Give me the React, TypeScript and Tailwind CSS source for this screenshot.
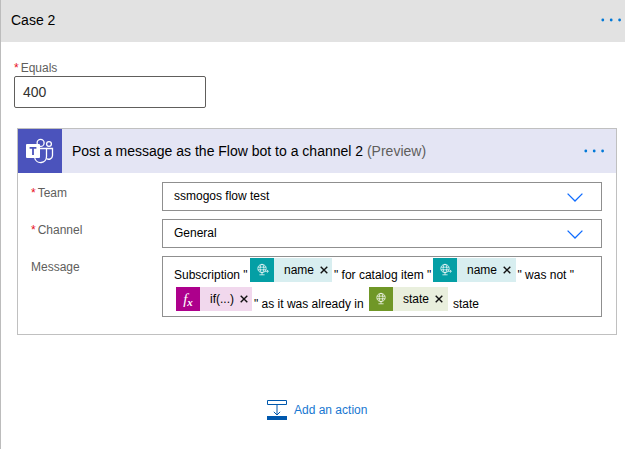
import type { ReactNode } from "react";

function Dots({ className = "" }: { className?: string }) {
  return (
    <svg className={className} width="21" height="4" viewBox="0 0 21 4" fill="#0078d7">
      <circle cx="1.8" cy="2" r="1.4" />
      <circle cx="10.2" cy="2" r="1.4" />
      <circle cx="18.6" cy="2" r="1.4" />
    </svg>
  );
}

function TeamsIcon() {
  return (
    <svg width="44" height="44" viewBox="0 0 44 44" fill="none" stroke="#fff" strokeWidth="1.3">
      <circle cx="22.6" cy="13.9" r="3.5" />
      <circle cx="31" cy="15" r="2.4" />
      <path d="M21.5 19.5h7v8a6 6 0 0 1-11.8 1.6" />
      <path d="M28.5 19.5h6v7a3.8 3.8 0 0 1-6 3" />
      <rect x="8" y="15" width="14" height="14" rx="1" fill="#fff" stroke="none" />
      <path d="M11.6 18.9h6.8M15 18.9v7.1" stroke="#4b53bc" strokeWidth="1.8" />
    </svg>
  );
}

function GlobeIcon({ arrow = false }: { arrow?: boolean }) {
  return (
    <svg width="24" height="24" viewBox="0 0 24 24" fill="none" stroke="#fff" strokeOpacity="0.9" strokeWidth="0.8">
      <circle cx="12" cy="10.5" r="4.2" />
      <ellipse cx="12" cy="10.5" rx="1.9" ry="4.2" />
      <path d="M8.1 9.2h7.8M8.1 11.8h7.8M12 14.7v2M9.4 16.8h5.2" />
      {arrow && <path d="M14.8 13.3h3.4M16.9 11.9l1.5 1.4-1.5 1.4" />}
    </svg>
  );
}

function Chip({ icon, label, className, iconClass }: { icon: ReactNode; label: string; className: string; iconClass: string }) {
  return (
    <span className={`flex h-6 shrink-0 items-center ${className}`}>
      <span className={`flex size-6 items-center justify-center ${iconClass}`}>{icon}</span>
      <span className="ml-2.5 leading-6">{label}</span>
      <svg className="-mt-px ml-[5.5px]" width="8" height="8" viewBox="0 0 8 8" stroke="#111" strokeWidth="1.4">
        <path d="M.7.7l6.6 6.6M7.3.7L.7 7.3" />
      </svg>
    </span>
  );
}

function Label({ children, required = false }: { children: string; required?: boolean }) {
  return (
    <div className="w-[131px] shrink-0 pt-[3px] text-xs leading-4 text-[#605e5c]">
      {required && <span className="mr-[2px] text-[#e81123]">*</span>}
      {children}
    </div>
  );
}

function Select({ value }: { value: string }) {
  return (
    <div className="flex h-[29px] w-[440px] items-center justify-between border border-[#8f8f8f] pr-[18px] pl-[11px] text-xs text-black">
      <span className="-mt-[2px]">{value}</span>
      <svg className="mt-px" width="16" height="9" viewBox="0 0 16 9" fill="none" stroke="#0f6cff" strokeWidth="1.3">
        <path d="M.6.6L8 8 15.4.6" />
      </svg>
    </div>
  );
}

export default function App() {
  return (
    <div className="h-[449px] w-[625px] overflow-hidden border-l border-[#bcbcbc] bg-white font-['Liberation_Sans',Arial,sans-serif] text-black">
      <header className="flex h-[42px] items-center justify-between bg-[#e2e2e2] pr-[3px] pl-[10px] text-sm">
        <span className="-mt-[3px]">Case 2</span>
        <Dots className="-mt-[2px]" />
      </header>

      <div className="mt-[18px] ml-[13px] w-48">
        <div className="h-4 text-xs leading-4 text-[#605e5c]">
          <span className="mr-[2px] text-[#e81123]">*</span>Equals
        </div>
        <div className="flex h-8 items-center rounded-xs border border-[#605e5c] px-2 text-sm text-[#323130]">400</div>
      </div>

      <section className="mt-5 ml-4 h-[207px] w-[600px] border border-[#c0c0c0]">
        <div className="flex h-11 items-center bg-[#e4e5f4] text-sm">
          <div className="size-11 bg-[#4b53bc]">
            <TeamsIcon />
          </div>
          <div className="ml-2.5">
            Post a message as the Flow bot to a channel 2 <span className="text-[#605e5c]">(Preview)</span>
          </div>
          <Dots className="mr-[11px] ml-auto" />
        </div>
        <div className="flex flex-col gap-2 pt-[9px] pl-[13px]">
          <div className="flex">
            <Label required>Team</Label>
            <Select value="ssmogos flow test" />
          </div>
          <div className="flex">
            <Label required>Channel</Label>
            <Select value="General" />
          </div>
          <div className="flex">
            <Label>Message</Label>
            <div className="h-[61px] w-[440px] border border-[#8f8f8f] pt-px pl-[11px] text-xs leading-6 whitespace-nowrap">
              <div className="flex h-6">
                <span className="w-[76px] pt-[5px]">Subscription "</span>
                <Chip className="w-[82px] bg-[#d8eef0]" iconClass="bg-[#049fa5]" label="name" icon={<GlobeIcon arrow />} />
                <span className="w-[101px] pt-[5px] pl-[2px]">" for catalog item "</span>
                <Chip className="w-[83px] bg-[#d8eef0]" iconClass="bg-[#049fa5]" label="name" icon={<GlobeIcon arrow />} />
                <span className="pt-[5px] pl-[1.5px]">" was not "</span>
              </div>
              <div className="mt-[5px] ml-[2px] flex h-6">
                <Chip
                  className="w-[76px] bg-[#f1d8ed]"
                  iconClass="bg-[#ad008c]"
                  label="if(...)"
                  icon={
                    <span className="flex items-baseline font-['Liberation_Serif',serif] leading-6 text-white italic">
                      <span className="text-[15px]">f</span>
                      <span className="relative top-[2px] text-[11px] font-bold">x</span>
                    </span>
                  }
                />
                <span className="w-[117px] pt-[5px] pl-[2px]">" as it was already in</span>
                <Chip className="w-[79px] bg-[#e9efdd]" iconClass="bg-[#709727]" label="state" icon={<GlobeIcon />} />
                <span className="pt-[5px] pl-[5px]">state</span>
              </div>
            </div>
          </div>
        </div>
      </section>

      <div className="mt-[65px] ml-[266px] flex items-center gap-[7px] text-xs text-[#1777d1]">
        <svg width="20" height="20" viewBox="0 0 20 20" fill="none" stroke="#0058ad">
          <path d="M.5.5h19v4H.5zM10 5v10M6.8 11.8L10 15l3.2-3.2" />
          <path d="M0 16h20v4H0z" fill="#0058ad" stroke="none" />
        </svg>
        <span>Add an action</span>
      </div>
    </div>
  );
}
